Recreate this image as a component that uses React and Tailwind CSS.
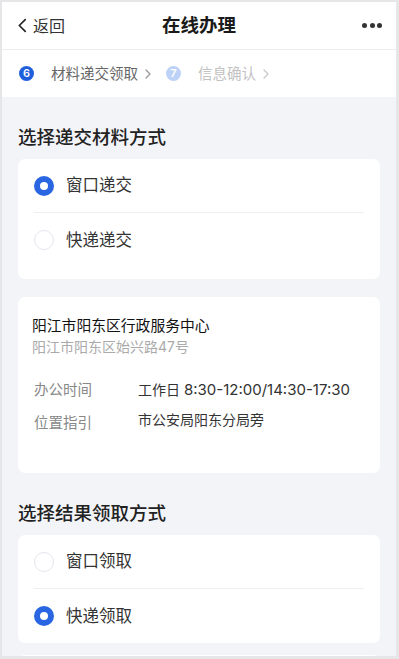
import React, { useState } from "react";

const font = { fontFamily: 'Inter, "Noto Sans CJK SC", "Noto Sans", sans-serif' };

const Radio = ({ checked }) =>
  checked ? (
    <span className="flex h-[20px] w-[20px] shrink-0 items-center justify-center rounded-full bg-[#2a66e2]">
      <span className="h-[8px] w-[8px] rounded-full bg-white" />
    </span>
  ) : (
    <span className="h-[20px] w-[20px] shrink-0 rounded-full border border-[#e3e6ec] bg-white" />
  );

const Chevron = ({ className }) => (
  <svg viewBox="0 0 8 12" className={className} fill="none">
    <path d="M2 2l4 4-4 4" stroke="currentColor" strokeWidth="1.3" strokeLinecap="round" strokeLinejoin="round" />
  </svg>
);

const OptionCard = ({ options, value, onChange, extra }) => (
  <div className={`mx-[16px] rounded-[7px] bg-white px-[16px] ${extra}`}>
    {options.map((opt, i) => (
      <div
        key={opt}
        onClick={() => onChange(i)}
        className={`flex h-[54px] items-center gap-[12px] ${
          i < options.length - 1 ? "border-b border-[#efeff2]" : ""
        }`}
      >
        <Radio checked={value === i} />
        <span className="text-[16.5px] text-[#333]">{opt}</span>
      </div>
    ))}
  </div>
);

const SectionTitle = ({ children }) => (
  <h3 className="px-[16px] pt-[28px] pb-[10px] text-[18.5px] leading-[24px] font-medium text-[#222]">
    {children}
  </h3>
);

export default function App() {
  const [submit, setSubmit] = useState(0);
  const [receive, setReceive] = useState(1);

  return (
    <div
      className="h-[659px] w-[399px] overflow-hidden bg-[#e6e6e8] pt-[2px] pr-[3px] pb-[3px] pl-[2px]"
      style={font}
    >
      <div className="flex h-full flex-col overflow-hidden bg-[#f3f4f8]">
        {/* header */}
        <div className="relative flex h-[48px] shrink-0 items-center border-b border-[#ececef] bg-white">
          <div className="flex items-center pl-[15px] text-[#333]">
            <svg viewBox="0 0 12 16" className="h-[15px] w-[11px]" fill="none">
              <path d="M9 1.5L2.5 8 9 14.5" stroke="#222" strokeWidth="1.8" strokeLinecap="round" strokeLinejoin="round" />
            </svg>
            <span className="ml-[5px] text-[16px]">返回</span>
          </div>
          <div className="absolute left-1/2 -translate-x-1/2 text-[18.5px] font-bold text-[#1a1a1a]">
            在线办理
          </div>
          <div className="ml-auto flex items-center gap-[2.5px] pr-[14px]">
            <span className="h-[5px] w-[5px] rounded-full bg-[#333]" />
            <span className="h-[5px] w-[5px] rounded-full bg-[#333]" />
            <span className="h-[5px] w-[5px] rounded-full bg-[#333]" />
          </div>
        </div>

        {/* steps */}
        <div className="flex h-[47px] shrink-0 items-center bg-white pl-[17px] text-[14.5px]">
          <span className="flex h-[15px] w-[15px] items-center justify-center rounded-full bg-[#1f5fdc] text-[11px] font-semibold text-white">
            6
          </span>
          <span className="ml-[17px] text-[#666]">材料递交领取</span>
          <Chevron className="ml-[6px] h-[12px] w-[8px] text-[#999]" />
          <span className="ml-[14px] flex h-[15px] w-[15px] items-center justify-center rounded-full bg-[#bdd2f6] text-[11px] font-semibold text-white">
            7
          </span>
          <span className="ml-[17px] text-[#c2c2c2]">信息确认</span>
          <Chevron className="ml-[6px] h-[12px] w-[8px] text-[#c8c8c8]" />
        </div>

        <SectionTitle>选择递交材料方式</SectionTitle>
        <OptionCard
          options={["窗口递交", "快递递交"]}
          value={submit}
          onChange={setSubmit}
          extra="pb-[12px]"
        />

        {/* address card */}
        <div className="mx-[16px] mt-[18px] rounded-[7px] bg-white px-[14px] pt-[18px] pb-[39px]">
          <div className="text-[14.8px] leading-[22px] text-[#111]">阳江市阳东区行政服务中心</div>
          <div className="text-[14px] leading-[20px] text-[#aaa]">阳江市阳东区始兴路47号</div>
          <div className="mt-[22px] flex pl-[2px] leading-[22px]">
            <span className="w-[104px] shrink-0 text-[14.5px] text-[#888]">办公时间</span>
            <span className="text-[14px] text-[#333]">
              工作日 <span className="text-[15px]">8:30-12:00/14:30-17:30</span>
            </span>
          </div>
          <div className="mt-[11px] flex pl-[2px] leading-[22px]">
            <span className="w-[104px] shrink-0 text-[14.5px] text-[#888]">位置指引</span>
            <span className="-mt-[3px] text-[14px] text-[#333]">市公安局阳东分局旁</span>
          </div>
        </div>

        <SectionTitle>选择结果领取方式</SectionTitle>
        <OptionCard
          options={["窗口领取", "快递领取"]}
          value={receive}
          onChange={setReceive}
          extra=""
        />

        <div className="mx-[16px] mt-[12px] h-[40px] shrink-0 rounded-[7px] bg-white" />
      </div>
    </div>
  );
}
